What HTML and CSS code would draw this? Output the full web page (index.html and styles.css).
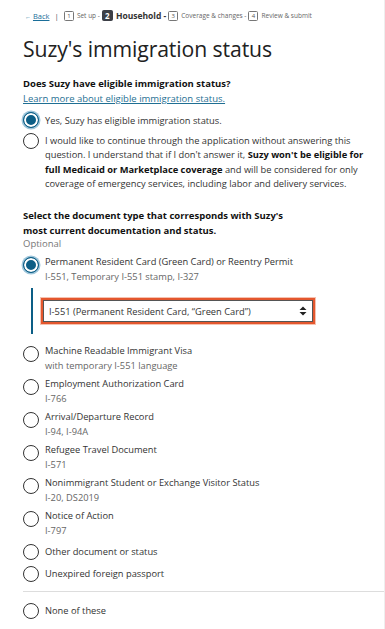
FILE: index.html
```html
<!DOCTYPE html>
<html lang="en">
<head>
<meta charset="utf-8">
<title>Suzy's immigration status</title>
<link rel="stylesheet" href="styles.css">
</head>
<body>
<div class="page">
  <nav class="steps">
    <a class="back" href="#"><span class="arrow">&#8592;</span> <u>Back</u></a>
    <span class="sep">|</span>
    <span class="num">1</span><span class="step">Set up -</span>
    <span class="num current">2</span><span class="step current-label">Household -</span>
    <span class="num">3</span><span class="step">Coverage &amp; changes -</span>
    <span class="num">4</span><span class="step">Review &amp; submit</span>
  </nav>

  <h1 class="title">Suzy's immigration status</h1>

  <section class="q1">
    <p class="qlabel">Does Suzy have eligible immigration status?</p>
    <a class="learn" href="#">Learn more about eligible immigration status.</a>
    <div class="radios">
      <div class="radio checked"><span class="dot"></span><div class="rtext"><span class="main">Yes, Suzy has eligible immigration status.</span></div></div>
      <div class="radio"><span class="dot"></span><div class="rtext para"><span class="main">I would like to continue through the application without answering this question. I understand that if I don't answer it, <b>Suzy won't be eligible for full Medicaid or Marketplace coverage</b> and will be considered for only coverage of emergency services, including labor and delivery services.</span></div></div>
    </div>
  </section>

  <section class="q2">
    <p class="qlabel q2label">Select the document type that corresponds with Suzy's<br>most current documentation and status.</p>
    <p class="optional">Optional</p>
    <div class="docs">
      <div class="radio checked"><span class="dot"></span><div class="rtext"><span class="main">Permanent Resident Card (Green Card) or Reentry Permit</span><span class="sub">I-551, Temporary I-551 stamp, I-327</span></div></div>
      <div class="reveal">
        <div class="select">
          <span class="value">I-551 (Permanent Resident Card, “Green Card”)</span>
          <svg class="updown" width="8" height="10" viewBox="0 0 8 10"><path d="M4 0.5 L7.5 4 H0.5 Z M4 9.5 L7.5 6 H0.5 Z" fill="#222"/></svg>
        </div>
      </div>
      <div class="radio"><span class="dot"></span><div class="rtext"><span class="main">Machine Readable Immigrant Visa</span><span class="sub">with temporary I-551 language</span></div></div>
      <div class="radio"><span class="dot"></span><div class="rtext"><span class="main">Employment Authorization Card</span><span class="sub">I-766</span></div></div>
      <div class="radio"><span class="dot"></span><div class="rtext"><span class="main">Arrival/Departure Record</span><span class="sub">I-94, I-94A</span></div></div>
      <div class="radio"><span class="dot"></span><div class="rtext"><span class="main">Refugee Travel Document</span><span class="sub">I-571</span></div></div>
      <div class="radio"><span class="dot"></span><div class="rtext"><span class="main">Nonimmigrant Student or Exchange Visitor Status</span><span class="sub">I-20, DS2019</span></div></div>
      <div class="radio"><span class="dot"></span><div class="rtext"><span class="main">Notice of Action</span><span class="sub">I-797</span></div></div>
      <div class="radio single"><span class="dot"></span><div class="rtext"><span class="main">Other document or status</span></div></div>
      <div class="radio single"><span class="dot"></span><div class="rtext"><span class="main">Unexpired foreign passport</span></div></div>
    </div>
    <hr class="divider">
    <div class="radio single"><span class="dot"></span><div class="rtext"><span class="main">None of these</span></div></div>
  </section>
</div>
</body>
</html>
```

FILE: styles.css
```css
html, body {
  margin: 0;
  padding: 0;
  background: #ffffff;
}
body {
  font-family: "Open Sans", "Noto Sans", sans-serif;
  color: #333333;
  font-size: 9.3px;
}
.page {
  padding: 9px 0 0 23px;
  border-right: 1px solid #eeeeee;
  min-height: 620px;
}
.steps {
  display: flex;
  align-items: center;
  height: 13px;
  font-size: 6.5px;
  color: #666;
  white-space: nowrap;
}
.back {
  color: #1a6e99;
  text-decoration: none;
  font-size: 7.5px;
  margin-left: 2px;
}
.back .arrow { font-size: 6px; }
.sep {
  margin: 0 5px 0 5px;
  color: #555;
  font-size: 8px;
}
.num {
  display: inline-flex;
  align-items: center;
  justify-content: center;
  width: 8px;
  height: 8px;
  border: 1px solid #777;
  border-radius: 1.5px;
  font-size: 6px;
  color: #555;
  margin-right: 3px;
}
.num.current {
  background: #3c3f46;
  border-color: #3c3f46;
  color: #fff;
  font-weight: 700;
  font-size: 8px;
  width: 9px;
  height: 9px;
}
.step { margin-right: 2px; }
.current-label {
  font-weight: 700;
  font-size: 8.5px;
  color: #333;
}
.title {
  font-weight: 400;
  font-size: 21.2px;
  color: #212121;
  margin: 13px 0 0 0;
  line-height: 28px;
  letter-spacing: -0.1px;
}
.q1 { margin-top: 13px; }
.qlabel {
  margin: 0;
  font-weight: 700;
  font-size: 9.5px;
  line-height: 16px;
  color: #111;
}
.q2label { line-height: 15px; }
.learn {
  display: block;
  color: #1f6f93;
  text-decoration: underline;
  font-size: 9.5px;
  line-height: 14px;
}
.radios {
  margin-top: 7px;
  display: flex;
  flex-direction: column;
  gap: 5px;
}
.radio {
  display: flex;
  align-items: flex-start;
  gap: 6px;
}
.dot {
  flex: none;
  width: 14px;
  height: 14px;
  border: 1.5px solid #333;
  border-radius: 50%;
  background: #fff;
  box-sizing: content-box;
  margin-top: -1px;
}
.docs .radio:not(.single) .dot { margin-top: 2px; }
.radio.checked .dot {
  background: #0c5e86;
  border-color: #0c5e86;
  box-shadow: inset 0 0 0 2px #fff, 0 0 0 1.5px #9fc6db;
}
.rtext {
  display: flex;
  flex-direction: column;
  font-size: 9.3px;
  line-height: 15.5px;
  color: #333;
  padding-right: 14px;
}
.rtext b { color: #111; }
.main { line-height: 15.5px; }
.para .main { line-height: 14.5px; }
.sub {
  color: #666;
  line-height: 14px;
}
.q2 { margin-top: 16px; }
.optional {
  margin: 0;
  color: #777;
  font-size: 9.5px;
  line-height: 11px;
}
.docs {
  margin-top: 6.5px;
  display: flex;
  flex-direction: column;
  gap: 4px;
}
.docs .main, .q2 .main { line-height: 14.5px; }
.docs .sub { line-height: 14.5px; }
.radio.single { margin-top: 3px; }
.reveal {
  margin: 0 0 6px 8px;
  border-left: 2.5px solid #0c5e86;
  padding: 12px 0 12px 8px;
}
.select {
  width: 258px;
  height: 20px;
  border: 1px solid #555;
  outline: 2px solid #e4572e;
  box-shadow: 0 0 0 3px #f6c2b0;
  display: flex;
  align-items: center;
  justify-content: space-between;
  padding: 0 5px 0 5px;
  font-size: 9.3px;
  color: #333;
  margin-left: 2px;
}
.updown { flex: none; }
.divider {
  border: none;
  border-top: 1px solid #dddddd;
  margin: 9px 0 12px 0;
}
```
